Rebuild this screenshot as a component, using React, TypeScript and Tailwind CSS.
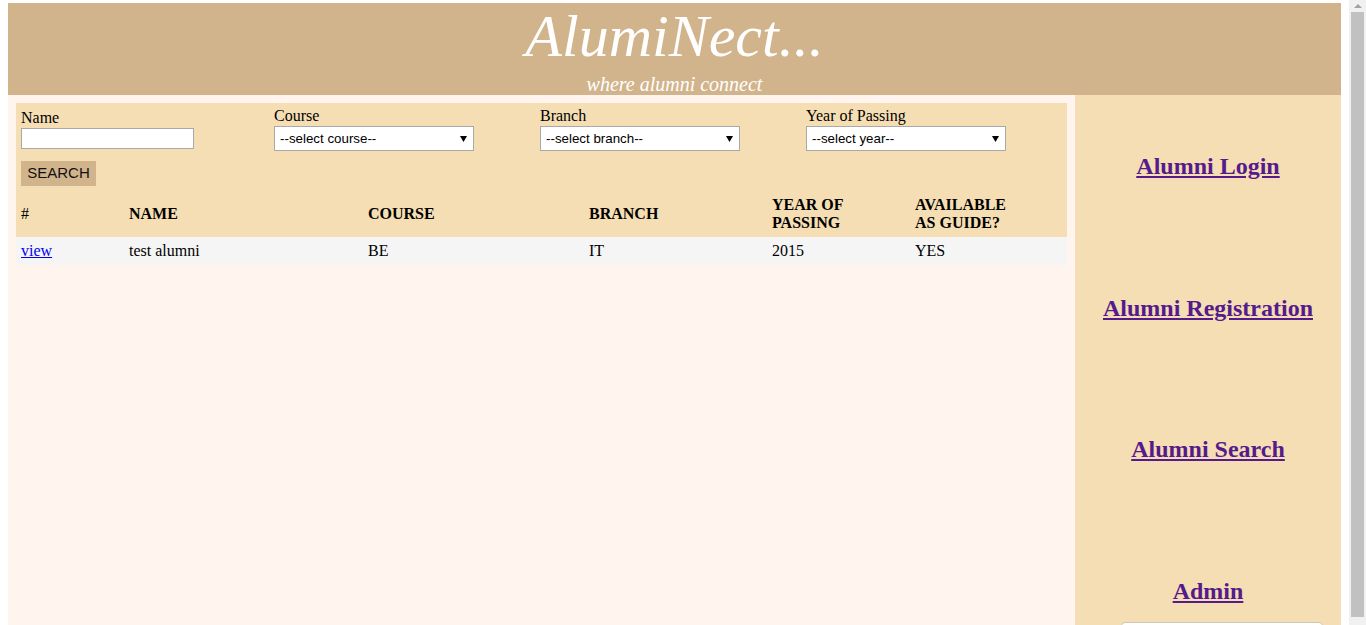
import React from "react";

const serif = { fontFamily: '"Liberation Serif", "Times New Roman", serif' };

function FakeSelect({ label }: { label: string }) {
  return (
    <div className="relative mt-[1px] w-[200px]">
      <select
        className="h-[25px] w-full appearance-none border border-[#a9a9a9] bg-white pl-[5px] text-[13.33px] text-black outline-none"
        style={{ fontFamily: '"Liberation Sans", Arial, sans-serif' }}
        defaultValue=""
      >
        <option value="">{label}</option>
      </select>
      <svg
        className="pointer-events-none absolute right-[7px] top-[10px]"
        width="7"
        height="6"
        viewBox="0 0 7 6"
      >
        <path d="M0 0 H7 L3.5 6 Z" fill="#000" />
      </svg>
    </div>
  );
}

const filters = [
  { name: "Course", placeholder: "--select course--" },
  { name: "Branch", placeholder: "--select branch--" },
  { name: "Year of Passing", placeholder: "--select year--" },
];

const sideLinks = ["Alumni Login", "Alumni Registration", "Alumni Search", "Admin"];

export default function App() {
  return (
    <div className="flex h-[625px] overflow-hidden bg-white text-black" style={serif}>
      <div className="w-[1349px] shrink-0 px-2 pt-[3px]">
        <header className="flex h-[92px] flex-col items-center bg-[#d2b48c] pt-[3px] text-white italic">
          <h1 className="text-[60px] leading-[60px]">AlumiNect...</h1>
          <p className="mt-[8px] text-[20px] leading-[20px]">where alumni connect</p>
        </header>

        <div className="flex h-[540px]">
          <main className="w-[1067px] shrink-0 bg-[#fff5ee] p-2">
            <section className="bg-[#f5deb3] pt-1">
              <div className="grid grid-cols-[253px_266px_266px_1fr] items-center pl-[5px] text-[16px] leading-[18px]">
                <div>
                  <label className="block">Name</label>
                  <input
                    type="text"
                    className="mt-[1px] h-[21px] w-[173px] border border-[#a9a9a9] bg-white px-1 text-[13px] outline-none"
                  />
                </div>
                {filters.map((f) => (
                  <div key={f.name}>
                    <label className="block">{f.name}</label>
                    <FakeSelect label={f.placeholder} />
                  </div>
                ))}
              </div>

              <div className="mt-[10px] pl-[5px]">
                <button
                  type="button"
                  className="h-[25px] w-[75px] bg-[#d2b48c] text-[15px] text-[#111]"
                  style={{ fontFamily: '"Liberation Sans", Arial, sans-serif' }}
                >
                  SEARCH
                </button>
              </div>

              <div className="mt-[6px] grid h-[45px] grid-cols-[108px_239px_221px_183px_143px_1fr] items-center pb-[1px] pl-[5px] text-[16px] leading-[18px] font-bold">
                <div className="font-normal">#</div>
                <div>NAME</div>
                <div>COURSE</div>
                <div>BRANCH</div>
                <div>
                  YEAR OF
                  <br />
                  PASSING
                </div>
                <div>
                  AVAILABLE
                  <br />
                  AS GUIDE?
                </div>
              </div>
            </section>

            <div className="grid h-[28px] grid-cols-[108px_239px_221px_183px_143px_1fr] items-center bg-[#f5f5f5] pl-[5px] text-[16px] leading-[18px]">
              <a href="#" className="text-[#0000ee] underline">
                view
              </a>
              <div>test alumni</div>
              <div>BE</div>
              <div>IT</div>
              <div>2015</div>
              <div>YES</div>
            </div>
          </main>

          <aside className="flex flex-1 flex-col items-center gap-[113.6px] bg-[#f5deb3] pt-[57px]">
            {sideLinks.map((l) => (
              <h2 key={l} className="text-[24px] leading-[28px] font-bold">
                <a href="#" className="text-[#551a8b] underline">
                  {l}
                </a>
              </h2>
            ))}
            <div className="-mt-[96px] ml-[46px] h-[20px] w-[202px] shrink-0 self-start rounded-t-[4px] border border-[#cfc6b4] bg-white" />
          </aside>
        </div>
      </div>

      {/* scrollbar */}
      <div className="flex w-[17px] shrink-0 flex-col items-center bg-[#f1f1f1]">
        <svg className="mt-[4px]" width="8" height="4" viewBox="0 0 8 4">
          <path d="M0 4 L4 0 L8 4 Z" fill="#a3a3a3" />
        </svg>
        <div className="mt-[4px] h-[605px] w-[13px] bg-[#c1c1c1]" />
      </div>
    </div>
  );
}
